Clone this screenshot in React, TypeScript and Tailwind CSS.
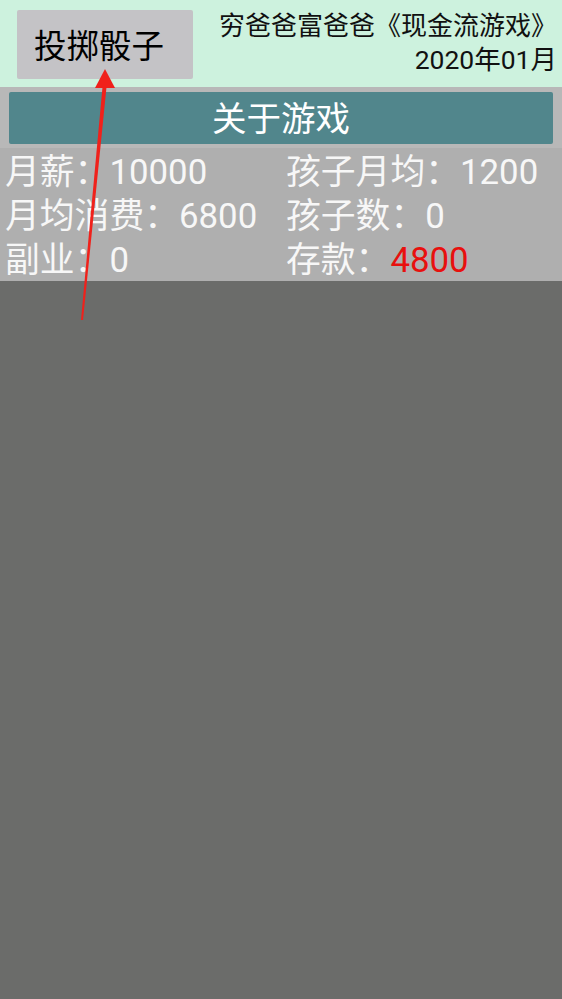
import React from "react";

const stats = [
  { label: "月薪：", value: "10000" },
  { label: "孩子月均：", value: "1200" },
  { label: "月均消费：", value: "6800" },
  { label: "孩子数：", value: "0" },
  { label: "副业：", value: "0" },
  { label: "存款：", value: "4800", red: true },
];

const App = () => {
  return (
    <div
      className="relative w-[562px] h-[999px] bg-[#6b6c6a] flex flex-col overflow-hidden"
      style={{ fontFamily: "Roboto, 'Noto Sans CJK SC', sans-serif" }}
    >
      {/* header */}
      <div className="h-[87px] bg-[#cdf2de] flex items-start justify-between pl-[17px] pr-[5px] pt-[10px]">
        <button className="w-[176px] h-[69px] bg-[#c4c3c6] rounded-[2px] text-[32.5px] text-black leading-none pr-[12px] pt-[5px]">
          投掷骰子
        </button>
        <div className="flex flex-col items-end leading-[34px] text-[#111] -mt-[1px]">
          <span className="text-[26px]">穷爸爸富爸爸《现金流游戏》</span>
          <span className="text-[26.5px]">2020年01月</span>
        </div>
      </div>

      {/* about */}
      <div className="bg-[#b8b8b8] px-[9px] pt-[5px] pb-[4px]">
        <button className="w-full h-[52px] bg-[#51868c] rounded-[2px] text-[34.5px] text-white leading-none pt-[2px]">
          关于游戏
        </button>
      </div>

      {/* stats */}
      <div className="bg-[#afafaf] grid grid-cols-2 pt-[1px]">
        {stats.map((s) => (
          <div key={s.label} className="h-[44px] flex items-center px-[5px] pt-[2px] text-[34.8px] text-[#f7f7f7] leading-none whitespace-nowrap">
            <span>{s.label}</span>
            <span className={s.red ? "text-[#e8100e]" : ""}>{s.value}</span>
          </div>
        ))}
      </div>

      <div className="flex-1" />

      {/* annotation arrow */}
      <svg className="absolute left-0 top-0 pointer-events-none" width="562" height="999">
        <polygon points="81,320 102.5,87 106.5,87 83,320" fill="#f0211b" />
        <polygon points="105,69 95,88 115,88" fill="#f0211b" />
      </svg>
    </div>
  );
};

export default App;
